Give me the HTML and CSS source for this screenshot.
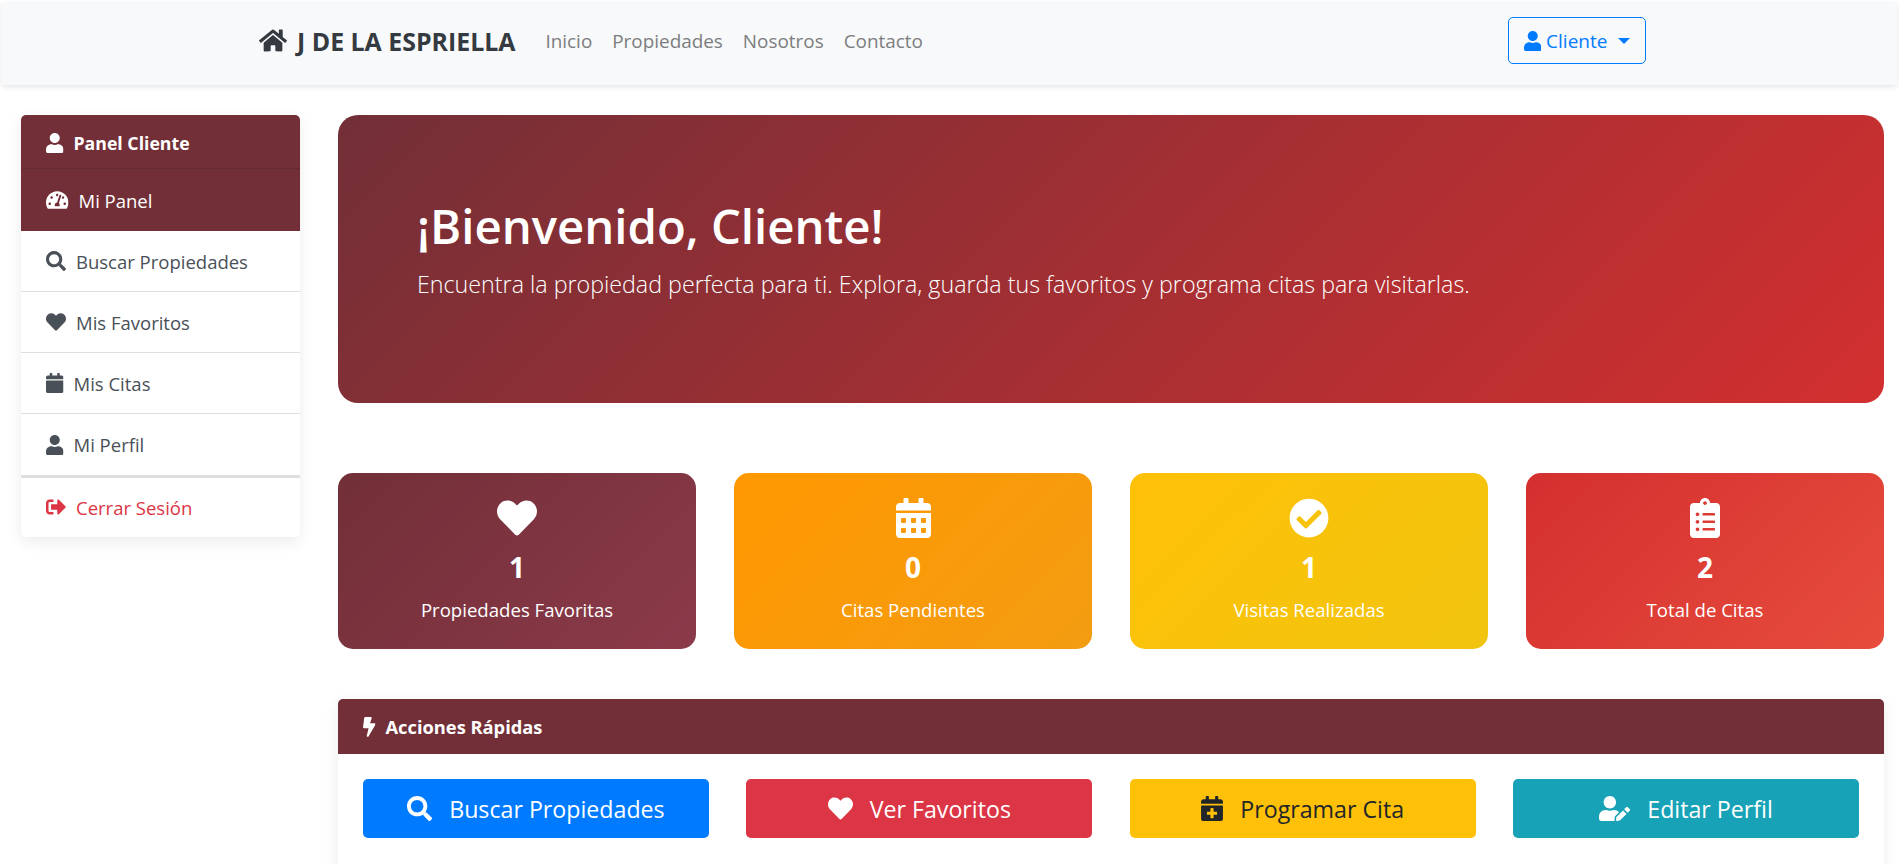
FILE: index.html
```html
<!DOCTYPE html>
<html lang="es">
<head>
  <meta charset="utf-8">
  <title>Panel Cliente - J de la Espriella</title>
  <link rel="stylesheet" href="styles.css">
</head>
<body>
  <svg class="sprite" xmlns="http://www.w3.org/2000/svg">
    <symbol id="i-home" viewBox="0 0 576 512"><path d="M280.37 148.26L96 300.11V464a16 16 0 0 0 16 16l112.06-.29a16 16 0 0 0 15.92-16V368a16 16 0 0 1 16-16h64a16 16 0 0 1 16 16v95.64a16 16 0 0 0 16 16.05L464 480a16 16 0 0 0 16-16V300L295.67 148.26a12.19 12.19 0 0 0-15.3 0zM571.6 251.47L488 182.56V44.05a12 12 0 0 0-12-12h-56a12 12 0 0 0-12 12v72.61L318.47 43a48 48 0 0 0-61 0L4.34 251.47a12 12 0 0 0-1.6 16.9l25.5 31A12 12 0 0 0 45.15 301l235.22-193.74a12.19 12.19 0 0 1 15.3 0L530.9 301a12 12 0 0 0 16.9-1.6l25.5-31a12 12 0 0 0-1.7-16.93z"/></symbol>
    <symbol id="i-user" viewBox="0 0 448 512"><path d="M224 256c70.7 0 128-57.3 128-128S294.7 0 224 0 96 57.3 96 128s57.3 128 128 128zm89.6 32h-16.7c-22.2 10.2-46.9 16-72.9 16s-50.6-5.8-72.9-16h-16.7C60.2 288 0 348.2 0 422.4V464c0 26.5 21.5 48 48 48h352c26.5 0 48-21.5 48-48v-41.6c0-74.2-60.2-134.4-134.4-134.4z"/></symbol>
    <symbol id="i-search" viewBox="0 0 512 512"><path d="M505 442.7L405.3 343c-4.5-4.5-10.6-7-17-7H372c27.6-35.3 44-79.7 44-128C416 93.1 322.9 0 208 0S0 93.1 0 208s93.1 208 208 208c48.3 0 92.7-16.4 128-44v16.3c0 6.4 2.5 12.5 7 17l99.7 99.7c9.4 9.4 24.6 9.4 33.9 0l28.3-28.3c9.4-9.4 9.4-24.6.1-34zM208 336c-70.7 0-128-57.2-128-128 0-70.7 57.2-128 128-128 70.7 0 128 57.2 128 128 0 70.7-57.2 128-128 128z"/></symbol>
    <symbol id="i-heart" viewBox="0 0 512 512"><path d="M462.3 62.6C407.5 15.9 326 24.3 275.7 76.2L256 96.5l-19.7-20.3C186.1 24.3 104.5 15.9 49.7 62.6c-62.8 53.6-66.1 149.8-9.9 207.9l193.5 199.8c12.5 12.9 32.8 12.9 45.3 0l193.5-199.8c56.3-58.1 53-154.3-9.8-207.9z"/></symbol>
    <symbol id="i-calendar" viewBox="0 0 448 512"><path d="M12 192h424c6.6 0 12 5.4 12 12v260c0 26.5-21.5 48-48 48H48c-26.5 0-48-21.5-48-48V204c0-6.6 5.4-12 12-12zm436-44v-36c0-26.5-21.5-48-48-48h-48V12c0-6.6-5.4-12-12-12h-40c-6.6 0-12 5.4-12 12v52H160V12c0-6.6-5.4-12-12-12h-40c-6.6 0-12 5.4-12 12v52H48C21.5 64 0 85.5 0 112v36c0 6.6 5.4 12 12 12h424c6.6 0 12-5.4 12-12z"/></symbol>
    <symbol id="i-calendar-alt" viewBox="0 0 448 512"><path d="M0 464c0 26.5 21.5 48 48 48h352c26.5 0 48-21.5 48-48V192H0v272zm320-196c0-6.6 5.4-12 12-12h40c6.6 0 12 5.4 12 12v40c0 6.6-5.4 12-12 12h-40c-6.6 0-12-5.4-12-12v-40zm0 128c0-6.6 5.4-12 12-12h40c6.6 0 12 5.4 12 12v40c0 6.6-5.4 12-12 12h-40c-6.6 0-12-5.4-12-12v-40zM192 268c0-6.6 5.4-12 12-12h40c6.6 0 12 5.4 12 12v40c0 6.6-5.4 12-12 12h-40c-6.6 0-12-5.4-12-12v-40zm0 128c0-6.6 5.4-12 12-12h40c6.6 0 12 5.4 12 12v40c0 6.6-5.4 12-12 12h-40c-6.6 0-12-5.4-12-12v-40zM64 268c0-6.6 5.4-12 12-12h40c6.6 0 12 5.4 12 12v40c0 6.6-5.4 12-12 12H76c-6.6 0-12-5.4-12-12v-40zm0 128c0-6.6 5.4-12 12-12h40c6.6 0 12 5.4 12 12v40c0 6.6-5.4 12-12 12H76c-6.6 0-12-5.4-12-12v-40zM400 64h-48V16c0-8.8-7.2-16-16-16h-32c-8.8 0-16 7.2-16 16v48H160V16c0-8.8-7.2-16-16-16h-32c-8.8 0-16 7.2-16 16v48H48C21.5 64 0 85.5 0 112v48h448v-48c0-26.5-21.5-48-48-48z"/></symbol>
    <symbol id="i-check" viewBox="0 0 512 512"><path d="M504 256c0 136.967-111.033 248-248 248S8 392.967 8 256 119.033 8 256 8s248 111.033 248 248zM227.314 387.314l184-184c6.248-6.248 6.248-16.379 0-22.627l-22.627-22.627c-6.248-6.249-16.379-6.249-22.628 0L216 308.118l-70.059-70.059c-6.248-6.248-16.379-6.248-22.628 0l-22.627 22.627c-6.248 6.248-6.248 16.379 0 22.627l104 104c6.249 6.249 16.379 6.249 22.628.001z"/></symbol>
    <symbol id="i-clipboard" viewBox="0 0 384 512"><path d="M336 64h-80c0-35.3-28.7-64-64-64s-64 28.7-64 64H48C21.5 64 0 85.5 0 112v352c0 26.5 21.5 48 48 48h288c26.5 0 48-21.5 48-48V112c0-26.5-21.5-48-48-48zM96 424c-13.3 0-24-10.7-24-24s10.7-24 24-24 24 10.7 24 24-10.7 24-24 24zm0-96c-13.3 0-24-10.7-24-24s10.7-24 24-24 24 10.7 24 24-10.7 24-24 24zm0-96c-13.3 0-24-10.7-24-24s10.7-24 24-24 24 10.7 24 24-10.7 24-24 24zm96-192c13.3 0 24 10.7 24 24s-10.7 24-24 24-24-10.7-24-24 10.7-24 24-24zm128 368c0 4.4-3.6 8-8 8H168c-4.4 0-8-3.6-8-8v-16c0-4.4 3.6-8 8-8h144c4.4 0 8 3.6 8 8v16zm0-96c0 4.4-3.6 8-8 8H168c-4.4 0-8-3.6-8-8v-16c0-4.4 3.6-8 8-8h144c4.4 0 8 3.6 8 8v16zm0-96c0 4.4-3.6 8-8 8H168c-4.4 0-8-3.6-8-8v-16c0-4.4 3.6-8 8-8h144c4.4 0 8 3.6 8 8v16z"/></symbol>
    <symbol id="i-bolt" viewBox="0 0 320 512"><path d="M296 160H180.6l42.6-129.8C227.2 15 215.7 0 200 0H56C44 0 33.8 8.9 32.2 20.8l-32 240C-1.7 275.2 9.5 288 24 288h118.7L96.6 482.5c-3.6 15.2 8 29.5 23.3 29.5 8.4 0 16.4-4.4 20.8-12l176-304c9.3-15.9-2.2-36-20.7-36z"/></symbol>
    <symbol id="i-signout" viewBox="0 0 512 512"><path d="M497 273L329 441c-15 15-41 4.5-41-17v-96H152c-13.3 0-24-10.7-24-24v-96c0-13.3 10.7-24 24-24h136V88c0-21.4 25.9-32 41-17l168 168c9.3 9.4 9.3 24.6 0 34zM192 436v-40c0-6.6-5.4-12-12-12H96c-17.7 0-32-14.3-32-32V160c0-17.7 14.3-32 32-32h84c6.6 0 12-5.4 12-12V76c0-6.6-5.4-12-12-12H96c-53 0-96 43-96 96v192c0 53 43 96 96 96h84c6.6 0 12-5.4 12-12z"/></symbol>
    <symbol id="i-gauge" viewBox="0 0 576 512"><path d="M288 32C128.94 32 0 160.94 0 320c0 52.8 14.25 102.26 39.06 144.8 5.61 9.62 16.3 15.2 27.44 15.2h443c11.14 0 21.83-5.58 27.44-15.2C561.75 422.26 576 372.8 576 320c0-159.06-128.94-288-288-288zm0 64c14.71 0 26.58 10.13 30.32 23.65-1.11 2.26-2.64 4.23-3.45 6.67l-9.22 27.67c-5.13 3.49-10.97 6.01-17.64 6.01-17.67 0-32-14.33-32-32S270.33 96 288 96zM96 384c-17.67 0-32-14.33-32-32s14.33-32 32-32 32 14.33 32 32-14.33 32-32 32zm48-160c-17.67 0-32-14.33-32-32s14.33-32 32-32 32 14.33 32 32-14.33 32-32 32zm246.77-72.41l-61.33 184C343.13 347.33 352 364.54 352 384c0 11.72-3.38 22.55-8.88 32H232.88c-5.5-9.45-8.88-20.28-8.88-32 0-33.94 26.5-61.43 59.9-63.59l61.34-184.01c4.17-12.56 17.73-19.45 30.36-15.17 12.57 4.19 19.35 17.79 15.17 30.36zm14.66 57.2l15.52-46.55c3.47-1.29 7.13-2.23 11.05-2.23 17.67 0 32 14.33 32 32s-14.33 32-32 32c-11.38-.01-20.89-6.28-26.57-15.22zM480 384c-17.67 0-32-14.33-32-32s14.33-32 32-32 32 14.33 32 32-14.33 32-32 32z"/></symbol>
    <symbol id="i-calendar-plus" viewBox="0 0 448 512"><path d="M436 160H12c-6.6 0-12-5.4-12-12v-36c0-26.5 21.5-48 48-48h48V12c0-6.6 5.4-12 12-12h40c6.6 0 12 5.4 12 12v52h128V12c0-6.6 5.4-12 12-12h40c6.6 0 12 5.4 12 12v52h48c26.5 0 48 21.5 48 48v36c0 6.6-5.4 12-12 12zM12 192h424c6.6 0 12 5.4 12 12v260c0 26.5-21.5 48-48 48H48c-26.5 0-48-21.5-48-48V204c0-6.6 5.4-12 12-12zm316 140c0-6.6-5.4-12-12-12h-60v-60c0-6.6-5.4-12-12-12h-40c-6.6 0-12 5.4-12 12v60h-60c-6.6 0-12 5.4-12 12v40c0 6.6 5.4 12 12 12h60v60c0 6.6 5.4 12 12 12h40c6.6 0 12-5.4 12-12v-60h60c6.6 0 12-5.4 12-12v-40z"/></symbol>
    <symbol id="i-user-edit" viewBox="0 0 640 512"><path d="M224 256c70.7 0 128-57.3 128-128S294.7 0 224 0 96 57.3 96 128s57.3 128 128 128zm89.6 32h-16.7c-22.2 10.2-46.9 16-72.9 16s-50.6-5.8-72.9-16h-16.7C60.2 288 0 348.2 0 422.4V464c0 26.5 21.5 48 48 48h274.9c-2.4-6.8-3.4-14-2.6-21.3l6.8-60.9 1.2-11.1 7.9-7.9 77.3-77.3c-24.5-27.7-60-45.5-99.9-45.5zm45.3 145.3l-6.8 61c-1.1 10.2 7.5 18.8 17.6 17.6l60.9-6.8 137.9-137.9-71.7-71.7-137.9 137.8zM633 268.9L595.1 231c-9.3-9.3-24.5-9.3-33.8 0l-37.8 37.8-4.1 4.1 71.8 71.7 41.8-41.8c9.3-9.4 9.3-24.5 0-33.9z"/></symbol>
  </svg>

  <nav class="navbar">
    <a class="brand" href="#"><svg class="icon w-home"><use href="#i-home"/></svg>J DE LA ESPRIELLA</a>
    <div class="nav-links">
      <a href="#">Inicio</a>
      <a href="#">Propiedades</a>
      <a href="#">Nosotros</a>
      <a href="#">Contacto</a>
    </div>
    <button class="user-btn"><svg class="icon w-user"><use href="#i-user"/></svg>Cliente<span class="caret"></span></button>
  </nav>

  <div class="page">
    <aside class="sidebar">
      <div class="side-head"><svg class="icon w-user"><use href="#i-user"/></svg>Panel Cliente</div>
      <a class="side-item active" href="#"><svg class="icon w-gauge"><use href="#i-gauge"/></svg>Mi Panel</a>
      <a class="side-item" href="#"><svg class="icon w-full"><use href="#i-search"/></svg>Buscar Propiedades</a>
      <a class="side-item" href="#"><svg class="icon w-full"><use href="#i-heart"/></svg>Mis Favoritos</a>
      <a class="side-item" href="#"><svg class="icon w-user"><use href="#i-calendar"/></svg>Mis Citas</a>
      <a class="side-item last" href="#"><svg class="icon w-user"><use href="#i-user"/></svg>Mi Perfil</a>
      <a class="side-item logout" href="#"><svg class="icon w-full"><use href="#i-signout"/></svg>Cerrar Sesión</a>
    </aside>

    <main class="content">
      <section class="hero">
        <h1>¡Bienvenido, Cliente!</h1>
        <p>Encuentra la propiedad perfecta para ti. Explora, guarda tus favoritos y programa citas para visitarlas.</p>
      </section>

      <section class="stats">
        <div class="stat wine">
          <svg class="stat-icon w-full"><use href="#i-heart"/></svg>
          <div class="stat-num">1</div>
          <div class="stat-label">Propiedades Favoritas</div>
        </div>
        <div class="stat orange">
          <svg class="stat-icon w-user"><use href="#i-calendar-alt"/></svg>
          <div class="stat-num">0</div>
          <div class="stat-label">Citas Pendientes</div>
        </div>
        <div class="stat yellow">
          <svg class="stat-icon w-full"><use href="#i-check"/></svg>
          <div class="stat-num">1</div>
          <div class="stat-label">Visitas Realizadas</div>
        </div>
        <div class="stat red">
          <svg class="stat-icon w-clip"><use href="#i-clipboard"/></svg>
          <div class="stat-num">2</div>
          <div class="stat-label">Total de Citas</div>
        </div>
      </section>

      <section class="card">
        <div class="card-head"><svg class="icon w-bolt"><use href="#i-bolt"/></svg>Acciones Rápidas</div>
        <div class="actions">
          <a class="action blue" href="#"><svg class="action-icon w-full"><use href="#i-search"/></svg>Buscar Propiedades</a>
          <a class="action pink" href="#"><svg class="action-icon w-full"><use href="#i-heart"/></svg>Ver Favoritos</a>
          <a class="action amber" href="#"><svg class="action-icon w-user"><use href="#i-calendar-plus"/></svg>Programar Cita</a>
          <a class="action teal" href="#"><svg class="action-icon w-edit"><use href="#i-user-edit"/></svg>Editar Perfil</a>
        </div>
      </section>
    </main>
  </div>
</body>
</html>
```

FILE: styles.css
```css
* {
  box-sizing: border-box;
}

html {
  overflow: hidden;
}

body {
  margin: 0;
  padding: 2px 2px 0;
  height: 864px;
  overflow: hidden;
  background: #fff;
  font-family: "Open Sans", "Noto Sans", sans-serif;
  font-size: 18.5px;
  color: #212529;
}

a {
  text-decoration: none;
}

.sprite {
  display: none;
}

.icon {
  height: 20px;
  fill: currentColor;
  flex: none;
}

.w-home { width: 28px; }
.w-user { width: 17.5px; }
.w-full { width: 20px; }
.w-gauge { width: 22.5px; }
.w-bolt { width: 12.5px; }

/* navbar */
.navbar {
  height: 83px;
  display: flex;
  align-items: center;
  padding: 0 251px 6px 257px;
  background: #f8f9fa;
  box-shadow: 0 2px 5px rgba(0, 0, 0, 0.1);
}

.brand {
  display: flex;
  align-items: center;
  gap: 10px;
  font-size: 24.9px;
  font-weight: 700;
  color: #343a40;
}

.brand .icon {
  height: 25px;
}

.nav-links {
  display: flex;
  gap: 20px;
  margin-left: 30px;
}

.nav-links a {
  font-size: 18.9px;
  color: #7c7d7e;
}

.user-btn {
  margin-left: auto;
  width: 138px;
  height: 47px;
  display: flex;
  align-items: center;
  justify-content: center;
  gap: 5px;
  border: 1px solid #007bff;
  border-radius: 5px;
  background: transparent;
  color: #007bff;
  font: inherit;
  font-size: 19px;
}

.caret {
  margin-left: 6px;
  border-top: 6px solid #007bff;
  border-left: 6px solid transparent;
  border-right: 6px solid transparent;
}

/* layout */
.page {
  display: grid;
  grid-template-columns: 279px 1fr;
  gap: 38px;
  padding: 30px 13px 0 19px;
  align-items: start;
}

/* sidebar */
.sidebar {
  height: 422px;
  border-radius: 5px;
  background: #fff;
  box-shadow: 0 5px 15px rgba(0, 0, 0, 0.08);
  overflow: hidden;
}

.side-head {
  height: 54px;
  display: flex;
  align-items: center;
  gap: 10px;
  padding: 2px 0 0 25px;
  background: #722f37;
  border-bottom: 1px solid #662a31;
  color: #fff;
  font-weight: 700;
  font-size: 17.7px;
}

.side-item {
  height: 61px;
  display: flex;
  align-items: center;
  gap: 10px;
  padding-left: 25px;
  border-bottom: 1px solid #dfdfdf;
  color: #495057;
}

.side-item.active {
  height: 62px;
  background: #722f37;
  border-bottom: 0;
  color: #fff;
}

.side-item.last {
  height: 64px;
  border-bottom: 3px solid #dfdfdf;
}

.side-item.logout {
  height: 60px;
  padding-bottom: 2px;
  border-bottom: 0;
  color: #dc3545;
}

/* hero */
.hero {
  height: 288px;
  display: flex;
  flex-direction: column;
  justify-content: center;
  padding: 0 79px 20px;
  border-radius: 20px;
  background: linear-gradient(135deg, #722f37, #d32f2f);
  color: #fff;
}

.hero h1 {
  margin: 0 0 14px;
  font-size: 47.3px;
  font-weight: 600;
  line-height: 1.2;
}

.hero p {
  margin: 0;
  font-size: 23.25px;
  font-weight: 300;
}

/* stat cards */
.stats {
  display: grid;
  grid-template-columns: repeat(4, 1fr);
  gap: 38px;
  margin: 70px 0 50px;
}

.stat {
  height: 176px;
  display: flex;
  flex-direction: column;
  align-items: center;
  padding-top: 25px;
  border-radius: 15px;
  color: #fff;
}

.stat-icon {
  height: 40px;
  fill: currentColor;
}

.stat-icon.w-full { width: 40px; }
.stat-icon.w-user { width: 35px; }
.stat-icon.w-clip { width: 30px; }

.stat-num {
  margin-top: 10px;
  font-size: 28px;
  font-weight: 700;
  line-height: 38px;
}

.stat-label {
  margin-top: 12px;
  font-size: 18.6px;
  line-height: 24px;
}

.wine { background: linear-gradient(135deg, #722f37, #8b3a4a); }
.orange { background: linear-gradient(135deg, #ff9800, #f39c12); }
.yellow { background: linear-gradient(135deg, #ffc107, #f1c40f); }
.red { background: linear-gradient(135deg, #d32f2f, #e74c3c); }

/* quick actions */
.card {
  border-radius: 5px;
  background: #fff;
  box-shadow: 0 5px 15px rgba(0, 0, 0, 0.08);
  overflow: hidden;
}

.card-head {
  height: 55px;
  display: flex;
  align-items: center;
  gap: 10px;
  padding-left: 25px;
  background: #722f37;
  color: #fff;
  font-weight: 700;
  font-size: 18.3px;
}

.actions {
  display: grid;
  grid-template-columns: repeat(4, 1fr);
  gap: 37.5px;
  padding: 25px 25px 50px;
}

.action {
  height: 59px;
  display: flex;
  align-items: center;
  justify-content: center;
  gap: 17px;
  border-radius: 5px;
  color: #fff;
  font-size: 23.2px;
}

.action-icon {
  height: 25px;
  fill: currentColor;
}

.action-icon.w-full { width: 25px; }
.action-icon.w-user { width: 22px; }
.action-icon.w-edit { width: 31px; }

.blue { background: #007bff; }
.pink { background: #dc3545; }
.amber { background: #ffc107; color: #212529; }
.teal { background: #17a2b8; }
```
